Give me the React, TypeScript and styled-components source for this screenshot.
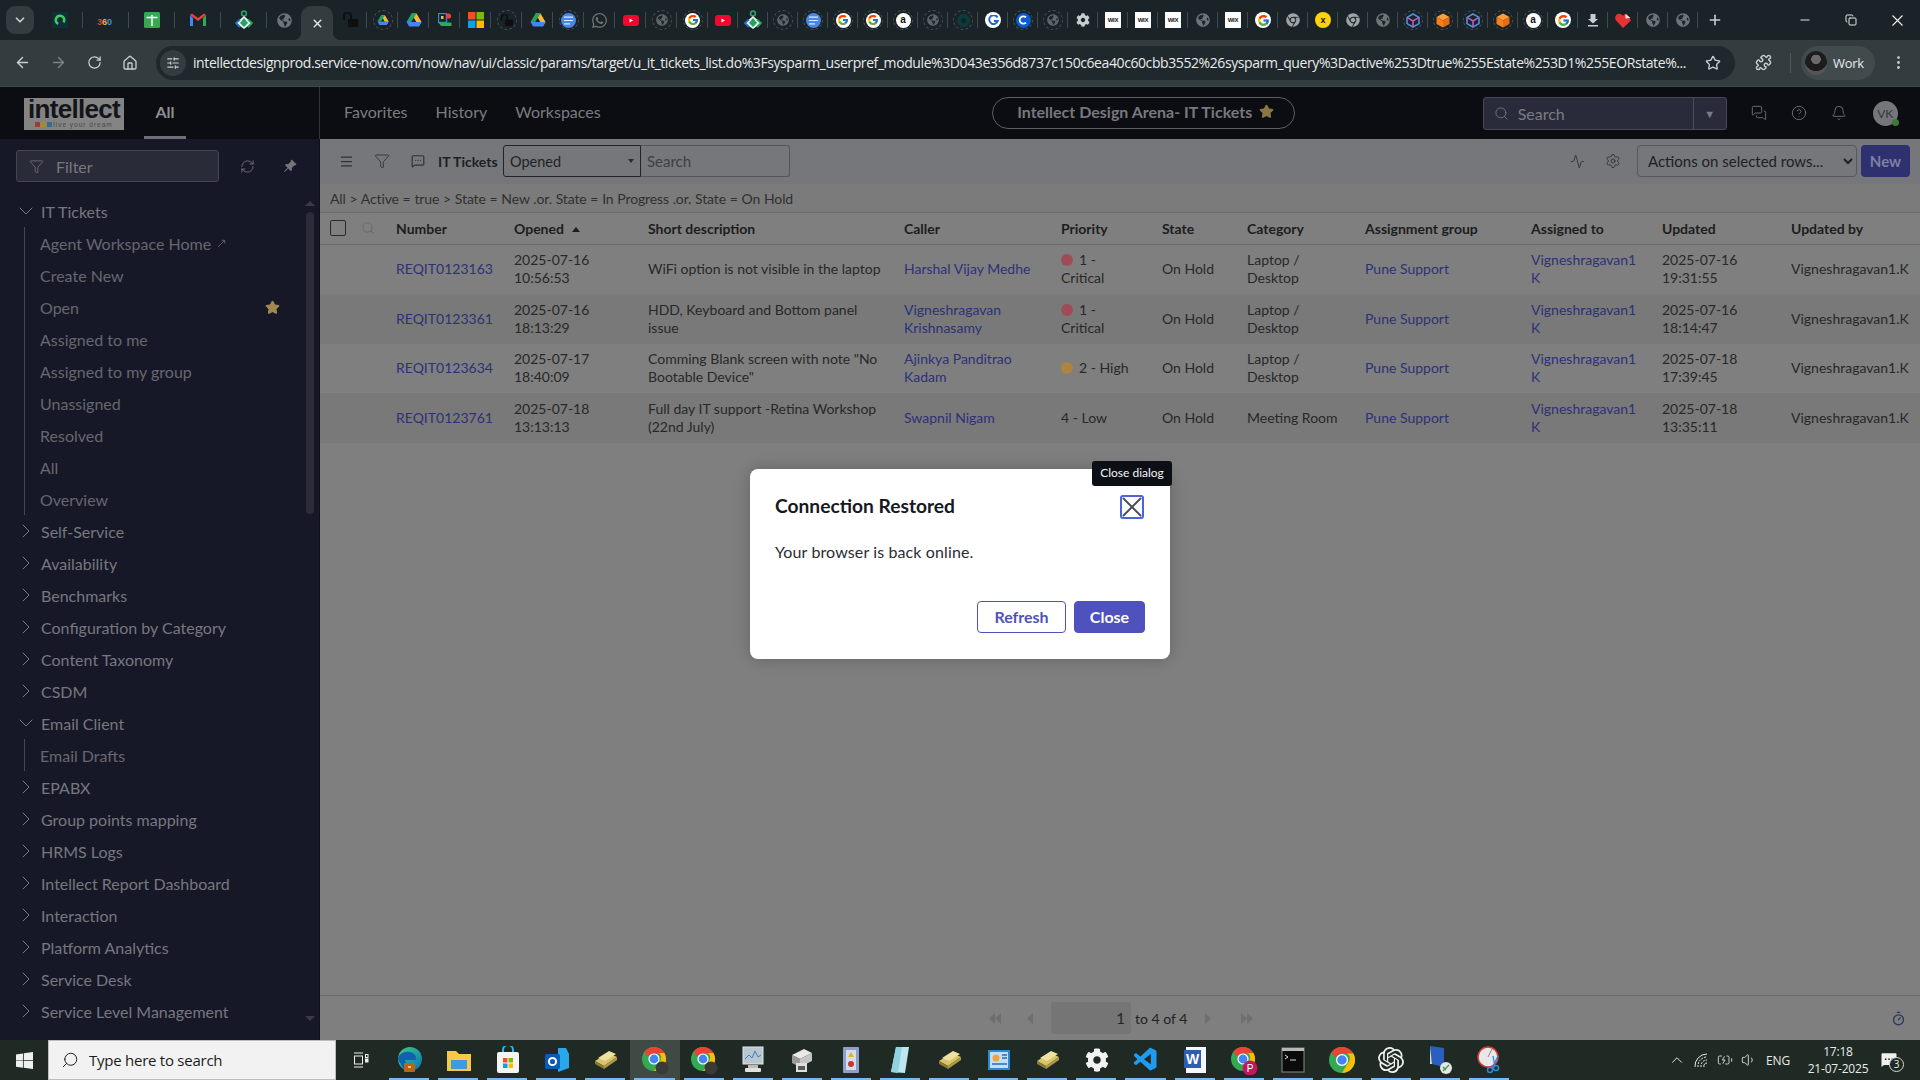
import React from 'react';
import styled, { createGlobalStyle } from 'styled-components';
import {
  ArrowLeft, ArrowRight, RotateCw, House, Star, Puzzle, EllipsisVertical, Search, Funnel, RefreshCw,
  ChevronRight, ChevronDown, X, Menu, MessageSquareMore, Activity, Settings, CircleHelp, Bell, MessagesSquare,
  Timer, SlidersHorizontal, Plus, Minus, Copy, Volume1, BatteryCharging, ChevronUp, MoveUpRight,
} from 'lucide-react';
import { BsPinAngleFill, BsWindows } from 'react-icons/bs';
import { FaChrome, FaGlobeAmericas, FaWhatsapp, FaCog } from 'react-icons/fa';
import { FcGoogle } from 'react-icons/fc';
import { VscVscode } from 'react-icons/vsc';
import { SiOpenai } from 'react-icons/si';

const GlobalStyle = createGlobalStyle`
  html, body { margin: 0; padding: 0; background: #1a2327; }
  * { box-sizing: border-box; }
  body { font-family: Lato, "Liberation Sans", sans-serif; }
`;

const Screen = styled.div`
  width: 1920px;
  height: 1080px;
  display: flex;
  flex-direction: column;
  overflow: hidden;
`;

/* ---- chrome tab strip ---- */
const TabStrip = styled.div`
  height: 40px;
  flex: none;
  display: flex;
  align-items: flex-end;
  background: #1a2327;
  color: #c9ced0;
`;

const TabSearchBtn = styled.div`
  width: 28px;
  height: 28px;
  margin: 0 3px 6px 6px;
  border-radius: 9px;
  background: #333c3f;
  display: flex;
  align-items: center;
  justify-content: center;
`;

const TabSlot = styled.div<{ $w: number; $noLine?: boolean }>`
  width: ${p => p.$w}px;
  height: 40px;
  flex: none;
  display: flex;
  align-items: center;
  justify-content: center;
  background-image: ${p => (p.$noLine ? 'none' : 'linear-gradient(#42494c, #42494c)')};
  background-size: 1px 16px;
  background-repeat: no-repeat;
  background-position: right center;
`;

const ActiveTab = styled.div`
  width: 32px;
  height: 34px;
  flex: none;
  position: relative;
  background: #333c3f;
  border-radius: 10px 10px 0 0;
  display: flex;
  align-items: center;
  justify-content: center;
  &::before, &::after {
    content: '';
    position: absolute;
    bottom: 0;
    width: 8px;
    height: 8px;
  }
  &::before { left: -8px; background: radial-gradient(circle at 0 0, transparent 8px, #333c3f 8.5px); }
  &::after { right: -8px; background: radial-gradient(circle at 100% 0, transparent 8px, #333c3f 8.5px); }
`;

const NewTab = styled.div`
  width: 34px;
  height: 40px;
  flex: none;
  display: flex;
  align-items: center;
  justify-content: center;
`;

const WindowControls = styled.div`
  margin-left: auto;
  display: flex;
  flex: none;
`;

const WindowBtn = styled.div`
  width: 46px;
  height: 40px;
  display: flex;
  align-items: center;
  justify-content: center;
  color: #e4e7e8;
`;

const Ring = styled.span`
  width: 20px;
  height: 20px;
  border: 1.5px dashed #4c5558;
  border-radius: 50%;
  display: flex;
  align-items: center;
  justify-content: center;
`;

const Round = styled.span<{ $bg: string; $size?: number }>`
  width: ${p => p.$size ?? 16}px;
  height: ${p => p.$size ?? 16}px;
  border-radius: 50%;
  background: ${p => p.$bg};
  display: flex;
  align-items: center;
  justify-content: center;
  flex: none;
`;

const WixBadge = styled.span`
  width: 16px;
  height: 16px;
  background: #fff;
  color: #111;
  font: 700 6px "Liberation Sans", sans-serif;
  letter-spacing: -0.2px;
  display: flex;
  align-items: center;
  justify-content: center;
`;

const AmazonA = styled.span`
  color: #111;
  font: 700 10px "Liberation Sans", sans-serif;
  line-height: 10px;
`;

const BlackX = styled.span`
  color: #111;
  font: 700 9px "Liberation Sans", sans-serif;
`;

const Drive = ({ s = 16 }: { s?: number }) => (
  <svg width={s} height={s} viewBox="0 0 16 16">
    <polygon points="5.5,1.5 10.5,1.5 15.5,10 12.8,14.5 " fill="#f9bb2d" />
    <polygon points="5.5,1.5 10.5,1.5 5.2,10 0.5,10" fill="#20a464" />
    <polygon points="0.5,10 5.2,10 15.5,10 12.8,14.5 3.2,14.5" fill="#4285f4" />
  </svg>
);

const Gmail = () => (
  <svg width="16" height="14" viewBox="0 0 16 14">
    <path d="M0 2v11h3V5z" fill="#4285f4" />
    <path d="M16 2v11h-3V5z" fill="#34a853" />
    <path d="M0 2l8 6 8-6-2-1.5L8 5 2 .5z" fill="#ea4335" />
  </svg>
);

const Kite = () => (
  <svg width="18" height="20" viewBox="0 0 18 20">
    <circle cx="9" cy="3.5" r="2.4" fill="none" stroke="#2f9c6a" strokeWidth="1.6" />
    <polygon points="9,6 17,13 9,19 1,13" fill="#e8f2ef" />
    <polygon points="9,8 13,13 9,17 5,13" fill="#2aa05f" />
    <polyline points="5,9.5 1,13 5,17" fill="none" stroke="#2a72c9" strokeWidth="1.8" />
    <polyline points="13,9.5 17,13 13,17" fill="none" stroke="#2aa05f" strokeWidth="1.8" />
  </svg>
);

const Microsoft = () => (
  <svg width="16" height="16" viewBox="0 0 16 16">
    <rect width="7.5" height="7.5" fill="#f25022" />
    <rect x="8.5" width="7.5" height="7.5" fill="#7fba00" />
    <rect y="8.5" width="7.5" height="7.5" fill="#00a4ef" />
    <rect x="8.5" y="8.5" width="7.5" height="7.5" fill="#ffb900" />
  </svg>
);

const Lock = ({ s = 16 }: { s?: number }) => (
  <svg width={s} height={s} viewBox="0 0 16 16">
    <rect x="6" y="7" width="10" height="8" fill="#0d0f10" />
    <path d="M2 8V4a3.5 3.5 0 0 1 7 0v3" fill="none" stroke="#0d0f10" strokeWidth="2" />
  </svg>
);

const DocsBlue = () => (
  <Round $bg="#4a86e8" $size={15}>
    <svg width="9" height="9" viewBox="0 0 9 9">
      <path d="M0 1.2h9M0 4.5h9M0 7.8h6" stroke="#dfe9fb" strokeWidth="1.2" />
    </svg>
  </Round>
);

const Youtube = () => (
  <svg width="16" height="11" viewBox="0 0 16 11">
    <rect width="16" height="11" rx="3" fill="#f4052e" />
    <polygon points="6.5,3.5 10,5.5 6.5,7.5" fill="#fff" />
  </svg>
);

const Cube = ({ mix }: { mix?: boolean }) => (
  <svg width="14" height="15" viewBox="0 0 14 15">
    {mix ? (
      <g fill="none" strokeWidth="1.6">
        <path d="M7 1l6 3.4v6.2L7 14 1 10.6V4.4z" stroke="#4f8fe0" />
        <path d="M1 4.4L7 8l6-3.6M7 8v6" stroke="#c15bb8" />
      </g>
    ) : (
      <g>
        <polygon points="7,0.5 13.5,4 7,7.5 0.5,4" fill="#ff9d3c" />
        <polygon points="0.5,4 7,7.5 7,14.5 0.5,11" fill="#f47f1f" />
        <polygon points="13.5,4 7,7.5 7,14.5 13.5,11" fill="#e66d12" />
      </g>
    )}
  </svg>
);

const Heart = () => (
  <svg width="16" height="15" viewBox="0 0 16 15">
    <path d="M8 15L1 7.5C-1 4.5 1 .8 4.2.8 6 .8 7.2 1.8 8 3c.8-1.2 2-2.2 3.8-2.2L16 7.5z" fill="#e73232" />
    <polygon points="10.5,1 15.5,5 10.5,5.5" fill="#f4e6e6" />
  </svg>
);

const TeamsRing = () => (
  <svg width="16" height="16" viewBox="0 0 16 16">
    <rect width="16" height="16" rx="1" fill="#0f2f3a" />
    <circle cx="8" cy="8" r="4.2" fill="none" stroke="#49c95b" strokeWidth="2.6" strokeDasharray="20 6" transform="rotate(115 8 8)" />
  </svg>
);

const tabIcons: Record<string, React.ReactNode> = {
  teal: <TeamsRing />,
  t360: <svg width="18" height="16" viewBox="0 0 18 16"><text x="0" y="13" fontSize="9" fontWeight="700" fontFamily="Liberation Sans"><tspan fill="#d94135">3</tspan><tspan fill="#e0b52c">6</tspan><tspan fill="#2d9bd6">0</tspan></text></svg>,
  sheet: <svg width="16" height="16" viewBox="0 0 16 16"><rect width="16" height="16" rx="1.5" fill="#34a853" /><path d="M2.5 5.5h11M8 3v11" stroke="#fff" strokeWidth="1.4" /></svg>,
  gmail: <Gmail />,
  kite: <Kite />,
  globeDot: <FaGlobeAmericas size={15} color="#6e7477" />,
  lock: <Lock />,
  driveRing: <Ring><Drive s={12} /></Ring>,
  drive: <Drive />,
  meet: <svg width="14" height="14" viewBox="0 0 14 14"><rect x="0.5" y="0.5" width="8" height="9" fill="none" stroke="#2b8cd6" strokeWidth="1.4" /><path d="M0.5 9.5h13V13H3z" fill="#34a853" /><circle cx="10.5" cy="3" r="2.6" fill="#ea4335" /><rect x="3" y="3" width="2.5" height="3" fill="#f9bb2d" /></svg>,
  ms: <Microsoft />,
  lockRing: <Ring><Lock s={13} /></Ring>,
  docsRing: <Ring><DocsBlue /></Ring>,
  wa: <FaWhatsapp size={17} color="#6f7577" />,
  yt: <Youtube />,
  globeRing: <Ring><FaGlobeAmericas size={12} color="#5f6568" /></Ring>,
  gRing: <Ring><Round $bg="#fff" $size={15}><FcGoogle size={12} /></Round></Ring>,
  g: <Round $bg="#fff"><FcGoogle size={13} /></Round>,
  amazonRing: <Ring><Round $bg="#fff" $size={15}><AmazonA>a</AmazonA></Round></Ring>,
  cursorRing: <Ring><Round $bg="#0e3b37" $size={13}><Round $bg="#123" $size={5} /></Round></Ring>,
  gBlue: <Round $bg="#fff"><svg width="11" height="11" viewBox="0 0 11 11"><path d="M9.5 2.5A4.4 4.4 0 1 0 9.8 6H6" fill="none" stroke="#2563d8" strokeWidth="2" /></svg></Round>,
  cRing: <Ring><Round $bg="#0b5bd3" $size={15}><svg width="10" height="10" viewBox="0 0 10 10"><path d="M8 2.4A3.7 3.7 0 1 0 8 7.6" fill="none" stroke="#fff" strokeWidth="1.8" /></svg></Round></Ring>,
  gear: <FaCog size={14} color="#c8cdcf" />,
  wix: <WixBadge>WIX</WixBadge>,
  globe: <FaGlobeAmericas size={14} color="#6e7477" />,
  chrome: <FaChrome size={14} color="#9ea3a5" />,
  xcoin: <Round $bg="#fdd20a"><BlackX>x</BlackX></Round>,
  cubeRing: <Ring><Cube mix /></Ring>,
  orangeRing: <Ring><Cube /></Ring>,
  download: <svg width="12" height="13" viewBox="0 0 12 13"><path d="M3.5 0h5v5H11L6 9.5 1 5h2.5zM1 11h10v1.6H1z" fill="#c8cdcf" /></svg>,
  heart: <Heart />,
};

const wideTabs = ['teal', 't360', 'sheet', 'gmail', 'kite'];
const midTabs = ['driveRing', 'drive', 'meet', 'ms', 'lockRing', 'drive', 'docsRing', 'wa', 'yt', 'globeRing', 'gRing'];
const narrowTabs = [
  'yt', 'kite', 'globeRing', 'docsRing', 'gRing', 'gRing', 'amazonRing', 'globeRing', 'cursorRing', 'gBlue', 'cRing',
  'globeRing', 'gear', 'wix', 'wix', 'wix', 'globe', 'wix', 'g', 'chrome', 'xcoin', 'chrome', 'globe', 'cubeRing',
  'orangeRing', 'cubeRing', 'orangeRing', 'amazonRing', 'g', 'download', 'heart', 'globe', 'globe',
];

const BrowserTabs = () => (
  <TabStrip>
    <TabSearchBtn><ChevronDown size={14} strokeWidth={3} /></TabSearchBtn>
    {wideTabs.map((k, i) => <TabSlot key={i} $w={46}>{tabIcons[k]}</TabSlot>)}
    <TabSlot $w={34} $noLine>{tabIcons.globeDot}</TabSlot>
    <ActiveTab><X size={13} strokeWidth={2.6} color="#e8eaeb" /></ActiveTab>
    <TabSlot $w={34}>{tabIcons.lock}</TabSlot>
    {midTabs.map((k, i) => <TabSlot key={i} $w={31}>{tabIcons[k]}</TabSlot>)}
    {narrowTabs.map((k, i) => <TabSlot key={i} $w={30}>{tabIcons[k]}</TabSlot>)}
    <NewTab><Plus size={16} strokeWidth={2.4} /></NewTab>
    <WindowControls>
      <WindowBtn><Minus size={14} /></WindowBtn>
      <WindowBtn><Copy size={12} /></WindowBtn>
      <WindowBtn>
        <svg width="11" height="11" viewBox="0 0 11 11">
          <path d="M0.5 0.5l10 10M10.5 0.5l-10 10" stroke="#f0f2f3" strokeWidth="1.1" fill="none" />
        </svg>
      </WindowBtn>
    </WindowControls>
  </TabStrip>
);

/* ---- chrome address bar ---- */
const AddressRow = styled.div`
  height: 47px;
  flex: none;
  display: flex;
  align-items: center;
  background: #333c3f;
  border-bottom: 1px solid #3f484b;
  color: #c9ced0;
  padding: 0 0 1px 4px;
`;

const NavBtn = styled.div<{ $dim?: boolean }>`
  width: 36px;
  height: 34px;
  flex: none;
  display: flex;
  align-items: center;
  justify-content: center;
  color: ${p => (p.$dim ? '#7c8385' : '#c9ced0')};
`;

const Omnibox = styled.div`
  width: 1579px;
  height: 34px;
  margin-left: 8px;
  flex: none;
  border-radius: 17px;
  background: #1f282c;
  display: flex;
  align-items: center;
  padding-left: 4px;
`;

const SiteBadge = styled.div`
  width: 26px;
  height: 26px;
  border-radius: 50%;
  background: #333c3f;
  display: flex;
  align-items: center;
  justify-content: center;
  flex: none;
`;

const UrlText = styled.div`
  font: 400 14px "Open Sans", sans-serif;
  color: #e8eaeb;
  margin-left: 7px;
  width: 1500px;
  flex: none;
  white-space: nowrap;
  letter-spacing: -0.41px;
`;

const OmniStar = styled.div`
  margin-left: 12px;
  display: flex;
`;

const ExtBtn = styled.div`
  width: 36px;
  margin-left: 10px;
  display: flex;
  justify-content: center;
`;

const BarDivider = styled.div`
  width: 1px;
  height: 20px;
  background: #50595c;
  margin: 0 10px 0 9px;
`;

const ProfilePill = styled.div`
  width: 74px;
  height: 34px;
  border-radius: 17px;
  background: #414b4e;
  display: flex;
  align-items: center;
  gap: 6px;
  padding-left: 4px;
  font: 400 13px "Open Sans", sans-serif;
  color: #e8eaeb;
  letter-spacing: -0.3px;
`;

const ProfilePic = styled.div`
  width: 22px;
  height: 24px;
  border-radius: 50%;
  background: radial-gradient(circle at 50% 35%, #6a6a6a 0 24%, #1d1d1d 26% 60%, #555 62%);
`;

const MenuBtn = styled.div`
  margin-left: 3px;
  width: 40px;
  display: flex;
  justify-content: center;
`;

const AddressBar = () => (
  <AddressRow>
    <NavBtn><ArrowLeft size={17} /></NavBtn>
    <NavBtn $dim><ArrowRight size={17} /></NavBtn>
    <NavBtn><RotateCw size={15} /></NavBtn>
    <NavBtn><House size={16} /></NavBtn>
    <Omnibox>
      <SiteBadge><SlidersHorizontal size={14} /></SiteBadge>
      <UrlText>intellectdesignprod.service-now.com/now/nav/ui/classic/params/target/u_it_tickets_list.do%3Fsysparm_userpref_module%3D043e356d8737c150c6ea40c60cbb3552%26sysparm_query%3Dactive%253Dtrue%255Estate%253D1%255EORstate%...</UrlText>
      <OmniStar><Star size={16} /></OmniStar>
    </Omnibox>
    <ExtBtn><Puzzle size={17} /></ExtBtn>
    <BarDivider />
    <ProfilePill><ProfilePic />Work</ProfilePill>
    <MenuBtn><EllipsisVertical size={17} /></MenuBtn>
  </AddressRow>
);

/* ---- servicenow frame ---- */
const AppFrame = styled.div`
  flex: 1;
  position: relative;
  display: flex;
  flex-direction: column;
  min-height: 0;
`;

const AppHeader = styled.header`
  height: 52px;
  flex: none;
  display: flex;
  background: #0c0d12;
  color: #7b7c80;
  font-size: 16px;
`;

const HeaderLeft = styled.div`
  width: 320px;
  flex: none;
  display: flex;
  align-items: center;
  padding-left: 24px;
  border-right: 1px solid #34353b;
  height: 100%;
`;

const LogoBox = styled.div`
  width: 100px;
  height: 32px;
  margin-top: 1px;
  background: #848484;
  color: #14151a;
  display: flex;
  flex-direction: column;
  align-items: center;
`;

const LogoWord = styled.div`
  font: 700 26px/23px "Liberation Sans", sans-serif;
  letter-spacing: -0.7px;
`;

const LogoTag = styled.div`
  display: flex;
  align-items: center;
  gap: 1px;
  font: 400 6.5px/8px "Liberation Sans", sans-serif;
  letter-spacing: 1px;
  color: #4a4a4a;
`;

const LogoDot = styled.i<{ $c: string }>`
  width: 5px;
  height: 5px;
  background: ${p => p.$c};
`;

const AllTab = styled.div`
  margin-left: 20px;
  width: 42px;
  height: 100%;
  display: flex;
  align-items: center;
  justify-content: center;
  color: #8f9094;
  font-weight: 700;
  border-bottom: 3px solid #6d6e78;
`;

const HeaderNav = styled.nav`
  display: flex;
  align-items: center;
  gap: 28px;
  padding: 0 0 3px 24px;
`;

const HeaderCenter = styled.div`
  width: 303px;
  height: 32px;
  margin: 10px 0 0 391px;
  padding: 0 0 3px 5px;
  border: 1px solid #5c5d63;
  border-radius: 16px;
  display: flex;
  align-items: center;
  justify-content: center;
  gap: 7px;
  font-weight: 700;
  color: #77787e;
  flex: none;
`;

const HeaderSearch = styled.div`
  width: 244px;
  height: 33px;
  margin: 10px 0 0 188px;
  background: #2a2b3a;
  border: 1px solid #47485a;
  border-radius: 3px;
  display: flex;
  align-items: center;
  color: #7b7c84;
  flex: none;
`;

const HeaderSearchInput = styled.div`
  width: 210px;
  display: flex;
  align-items: center;
  gap: 9px;
  padding: 0 0 1px 10px;
  height: 100%;
  border-right: 1px solid #4c4d5e;
`;

const HeaderSearchCaret = styled.div`
  flex: 1;
  text-align: center;
  font-size: 11px;
`;

const HeaderIcons = styled.div`
  display: flex;
  align-items: center;
  gap: 24px;
  margin-left: 24px;
  color: #77787f;
  flex: none;
`;

const Avatar = styled.div`
  width: 25px;
  height: 25px;
  border-radius: 50%;
  background: #75767a;
  color: #36373c;
  font-size: 12px;
  position: relative;
  display: flex;
  align-items: center;
  justify-content: center;
  margin-left: 2px;
  &::after {
    content: '';
    position: absolute;
    right: -1px;
    bottom: 0;
    width: 7px;
    height: 7px;
    border-radius: 50%;
    background: #3d7a3a;
  }
`;

const AppBody = styled.div`
  flex: 1;
  display: flex;
  min-height: 0;
`;

/* ---- sidebar ---- */
const Sidebar = styled.aside`
  width: 320px;
  flex: none;
  background: #171827;
  color: #74757c;
  display: flex;
  flex-direction: column;
  border-right: 1px solid #0f1019;
`;

const FilterRow = styled.div`
  display: flex;
  align-items: center;
  padding: 11px 0 13px 16px;
`;

const FilterBox = styled.div`
  width: 203px;
  height: 32px;
  background: #2a2b38;
  border: 1px solid #45464f;
  border-radius: 3px;
  display: flex;
  align-items: center;
  gap: 12px;
  padding-left: 12px;
  font-size: 16px;
  color: #77787f;
`;

const FilterAction = styled.div`
  margin-left: 20px;
  width: 16px;
  display: flex;
  justify-content: center;
  & + & { margin-left: 27px; }
`;

const TreeWrap = styled.div`
  flex: 1;
  display: flex;
  min-height: 0;
`;

const Tree = styled.div`
  flex: 1;
  overflow: hidden;
  font-size: 16px;
`;

const GroupRow = styled.div`
  height: 32px;
  display: flex;
  align-items: center;
  gap: 3px;
  padding-left: 14px;
  color: #76777f;
`;

const ChildList = styled.div`
  margin-left: 24px;
  padding-left: 15px;
  border-left: 1px solid #46474f;
`;

const ChildRow = styled.div`
  height: 32px;
  display: flex;
  align-items: center;
  gap: 5px;
  padding-right: 26px;
  color: #66676f;
`;

const FavStar = styled.div`
  margin-left: auto;
  display: flex;
`;

const ScrollTrack = styled.div`
  width: 8px;
  margin-right: 5px;
  padding: 6px 0 19px;
  display: flex;
  flex-direction: column;
  align-items: center;
`;

const ScrollArrow = styled.div<{ $down?: boolean }>`
  width: 0;
  height: 0;
  border-left: 5px solid transparent;
  border-right: 5px solid transparent;
  ${p => (p.$down ? 'border-top: 5px solid #3a3b47;' : 'border-bottom: 5px solid #3a3b47;')}
`;

const ScrollThumb = styled.div`
  width: 8px;
  height: 302px;
  margin-top: 6px;
  border-radius: 4px;
  background: #2b2c38;
`;

const ScrollFill = styled.div`
  flex: 1;
`;

interface NavGroup { name: string; open?: boolean; children?: string[] }

const navGroups: NavGroup[] = [
  { name: 'IT Tickets', open: true, children: ['Agent Workspace Home', 'Create New', 'Open', 'Assigned to me', 'Assigned to my group', 'Unassigned', 'Resolved', 'All', 'Overview'] },
  { name: 'Self-Service' },
  { name: 'Availability' },
  { name: 'Benchmarks' },
  { name: 'Configuration by Category' },
  { name: 'Content Taxonomy' },
  { name: 'CSDM' },
  { name: 'Email Client', open: true, children: ['Email Drafts'] },
  { name: 'EPABX' },
  { name: 'Group points mapping' },
  { name: 'HRMS Logs' },
  { name: 'Intellect Report Dashboard' },
  { name: 'Interaction' },
  { name: 'Platform Analytics' },
  { name: 'Service Desk' },
  { name: 'Service Level Management' },
];

const SideNav = () => (
  <Sidebar>
    <FilterRow>
      <FilterBox><Funnel size={15} strokeWidth={1.2} />Filter</FilterBox>
      <FilterAction><RefreshCw size={15} strokeWidth={1.4} /></FilterAction>
      <FilterAction><BsPinAngleFill size={14} /></FilterAction>
    </FilterRow>
    <TreeWrap>
      <Tree>
        {navGroups.map(g => (
          <React.Fragment key={g.name}>
            <GroupRow>
              {g.open ? <ChevronDown size={24} strokeWidth={1} /> : <ChevronRight size={24} strokeWidth={1} />}
              {g.name}
            </GroupRow>
            {g.children && (
              <ChildList>
                {g.children.map(c => (
                  <ChildRow key={c}>
                    {c}
                    {c === 'Agent Workspace Home' && <MoveUpRight size={11} />}
                    {c === 'Open' && <FavStar><Star size={15} fill="#a08850" color="#a08850" /></FavStar>}
                  </ChildRow>
                ))}
              </ChildList>
            )}
          </React.Fragment>
        ))}
      </Tree>
      <ScrollTrack>
        <ScrollArrow />
        <ScrollThumb />
        <ScrollFill />
        <ScrollArrow $down />
      </ScrollTrack>
    </TreeWrap>
  </Sidebar>
);

/* ---- list ---- */
const Main = styled.main`
  flex: 1;
  min-width: 0;
  display: flex;
  flex-direction: column;
  background: #7f7f7f;
  color: #232323;
  font-size: 14px;
`;

const ListBar = styled.div`
  height: 45px;
  flex: none;
  background: #75777a;
  display: flex;
  align-items: center;
  padding: 0 10px 1px 18px;
  color: #2d3138;
`;

const BarIcon = styled.div`
  width: 16px;
  margin-right: 20px;
  display: flex;
  justify-content: center;
  &:nth-of-type(3) { margin-right: 12px; }
`;

const ListTitle = styled.div`
  font-weight: 700;
  font-size: 14px;
  color: #1d1f22;
  white-space: nowrap;
  width: 65px;
`;

const ListSelect = styled.div`
  width: 138px;
  height: 32px;
  border: 1px solid #22242a;
  border-radius: 3px 0 0 3px;
  display: flex;
  align-items: center;
  padding: 0 6px;
  font-size: 14.5px;
  color: #222;
  justify-content: space-between;
  &::after {
    content: '';
    border-left: 3px solid transparent;
    border-right: 3px solid transparent;
    border-top: 4px solid #2b2b2b;
  }
`;

const ListSearch = styled.div`
  width: 149px;
  height: 32px;
  border: 1px solid #53565c;
  border-left: none;
  border-radius: 0 3px 3px 0;
  display: flex;
  align-items: center;
  padding-left: 6px;
  font-size: 15px;
  color: #3e4045;
`;

const BarRight = styled.div`
  margin-left: auto;
  display: flex;
  align-items: center;
`;

const BarRightIcon = styled.div`
  width: 16px;
  margin-right: 20px;
  display: flex;
  justify-content: center;
  & + & { margin-right: 16px; }
`;

const ActionSelect = styled.select`
  width: 220px;
  height: 32px;
  background: transparent;
  border: 1px solid #55585e;
  border-radius: 4px;
  padding: 0 6px;
  font: 400 15px Lato, sans-serif;
  color: #1e2024;
  margin-right: 4px;
`;

const NewBtn = styled.div`
  width: 49px;
  height: 32px;
  background: #2e3070;
  color: #7e80a4;
  border-radius: 4px;
  font-weight: 700;
  font-size: 15px;
  display: flex;
  align-items: center;
  justify-content: center;
`;

const Breadcrumb = styled.div`
  height: 29px;
  flex: none;
  background: #7b7b7b;
  border-bottom: 1px solid #6a6a6a;
  display: flex;
  align-items: center;
  padding-left: 10px;
  font-size: 14px;
  letter-spacing: -0.14px;
  word-spacing: 0.4px;
  color: #303030;
  white-space: pre;
`;

const Table = styled.table`
  width: 1600px;
  table-layout: fixed;
  border-collapse: collapse;
`;

const Th = styled.th`
  height: 31px;
  padding: 0;
  text-align: left;
  font-weight: 700;
  color: #1d1d1d;
  border-bottom: 1px solid #6a6a6a;
`;

const Tr = styled.tr`
  &:nth-child(odd) td { background: #7f7f7f; }
  &:nth-child(even) td { background: #797979; }
`;

const Td = styled.td`
  padding: 6.75px 16px 6.75px 0;
  line-height: 18px;
  vertical-align: middle;
  color: #282828;
`;

const CellLink = styled.span`
  color: #2d3178;
`;

const HeadTools = styled.div`
  display: flex;
  align-items: center;
  padding-left: 10px;
  gap: 15px;
`;

const CheckBox = styled.div`
  width: 16px;
  height: 16px;
  border: 1px solid #2a2a2a;
  border-radius: 2px;
`;

const SortCaret = styled.span`
  display: inline-block;
  margin-left: 8px;
  vertical-align: 2px;
  border-left: 4px solid transparent;
  border-right: 4px solid transparent;
  border-bottom: 5px solid #1d1d1d;
`;

const PriorityCell = styled.div`
  max-width: 72px;
`;

const PriorityDot = styled.span<{ $c: string }>`
  display: inline-block;
  width: 12px;
  height: 12px;
  border-radius: 50%;
  background: ${p => p.$c};
  margin-right: 6px;
  vertical-align: -1px;
`;

const ListSpacer = styled.div`
  flex: 1;
`;

const Pager = styled.footer`
  height: 45px;
  flex: none;
  border-top: 1px solid #6a6a6a;
  display: flex;
  align-items: center;
  color: #6c6e72;
  padding-left: 669px;
`;

const PagerBtn = styled.div<{ $gap: number }>`
  margin-right: ${p => p.$gap}px;
  display: flex;
`;

const PagerInput = styled.div`
  width: 80px;
  height: 32px;
  background: #757575;
  border-radius: 3px;
  display: flex;
  align-items: center;
  justify-content: flex-end;
  padding-right: 6px;
  font-size: 15px;
  color: #222;
`;

const PagerText = styled.div`
  margin: 0 18px 0 4px;
  font-size: 14px;
  color: #222;
`;

const PagerTimer = styled.div`
  margin-left: auto;
  margin-right: 14px;
  color: #2d3560;
  display: flex;
`;

const PageArrow = ({ dir, double }: { dir: 'l' | 'r'; double?: boolean }) => (
  <svg width={double ? 12 : 6} height="11" viewBox={double ? '0 0 12 11' : '0 0 6 11'} fill="#6c6e72">
    {dir === 'l' ? <polygon points="6,0 0,5.5 6,11" /> : <polygon points="0,0 6,5.5 0,11" />}
    {double && (dir === 'l' ? <polygon points="12,0 6,5.5 12,11" /> : <polygon points="6,0 12,5.5 6,11" />)}
  </svg>
);

const colWidths = [76, 118, 134, 256, 157, 101, 85, 118, 166, 131, 129, 129];
const headers = ['Number', 'Opened', 'Short description', 'Caller', 'Priority', 'State', 'Category', 'Assignment group', 'Assigned to', 'Updated', 'Updated by'];

interface Ticket {
  number: string; opened: string; desc: string; caller: string; priority: string;
  dot?: string; category: string; updated: string;
}

const tickets: Ticket[] = [
  { number: 'REQIT0123163', opened: '2025-07-16 10:56:53', desc: 'WiFi option is not visible in the laptop', caller: 'Harshal Vijay Medhe', priority: '1 - Critical', dot: '#a04c58', category: 'Laptop / Desktop', updated: '2025-07-16 19:31:55' },
  { number: 'REQIT0123361', opened: '2025-07-16 18:13:29', desc: 'HDD, Keyboard and Bottom panel issue', caller: 'Vigneshragavan Krishnasamy', priority: '1 - Critical', dot: '#a04c58', category: 'Laptop / Desktop', updated: '2025-07-16 18:14:47' },
  { number: 'REQIT0123634', opened: '2025-07-17 18:40:09', desc: 'Comming Blank screen with note "No Bootable Device"', caller: 'Ajinkya Panditrao Kadam', priority: '2 - High', dot: '#ad8440', category: 'Laptop / Desktop', updated: '2025-07-18 17:39:45' },
  { number: 'REQIT0123761', opened: '2025-07-18 13:13:13', desc: 'Full day IT support -Retina Workshop (22nd July)', caller: 'Swapnil Nigam', priority: '4 - Low', category: 'Meeting Room', updated: '2025-07-18 13:35:11' },
];

const TicketList = () => (
  <Main>
    <ListBar>
      <BarIcon><Menu size={15} /></BarIcon>
      <BarIcon><Funnel size={16} strokeWidth={1.3} /></BarIcon>
      <BarIcon><MessageSquareMore size={14} /></BarIcon>
      <ListTitle>IT Tickets</ListTitle>
      <ListSelect>Opened</ListSelect>
      <ListSearch>Search</ListSearch>
      <BarRight>
        <BarRightIcon><Activity size={15} strokeWidth={1.4} /></BarRightIcon>
        <BarRightIcon><Settings size={16} strokeWidth={1.3} /></BarRightIcon>
        <ActionSelect defaultValue="a"><option value="a">Actions on selected rows...</option></ActionSelect>
        <NewBtn>New</NewBtn>
      </BarRight>
    </ListBar>
    <Breadcrumb>{'All > Active = true > State = New .or. State = In Progress .or. State = On Hold'}</Breadcrumb>
    <Table>
      <colgroup>
        {colWidths.map((w, i) => <col key={i} width={w} />)}
      </colgroup>
      <thead>
        <tr>
          <Th><HeadTools><CheckBox /><Search size={14} color="#6e6e6e" /></HeadTools></Th>
          {headers.map(h => <Th key={h}>{h}{h === 'Opened' && <SortCaret />}</Th>)}
        </tr>
      </thead>
      <tbody>
        {tickets.map(t => (
          <Tr key={t.number}>
            <Td />
            <Td><CellLink>{t.number}</CellLink></Td>
            <Td>{t.opened}</Td>
            <Td>{t.desc}</Td>
            <Td><CellLink>{t.caller}</CellLink></Td>
            <Td><PriorityCell>{t.dot && <PriorityDot $c={t.dot} />}{t.priority}</PriorityCell></Td>
            <Td>On Hold</Td>
            <Td>{t.category}</Td>
            <Td><CellLink>Pune Support</CellLink></Td>
            <Td><CellLink>Vigneshragavan1 K</CellLink></Td>
            <Td>{t.updated}</Td>
            <Td>Vigneshragavan1.K</Td>
          </Tr>
        ))}
      </tbody>
    </Table>
    <ListSpacer />
    <Pager>
      <PagerBtn $gap={26}><PageArrow dir="l" double /></PagerBtn>
      <PagerBtn $gap={18}><PageArrow dir="l" /></PagerBtn>
      <PagerInput>1</PagerInput>
      <PagerText>to 4 of 4</PagerText>
      <PagerBtn $gap={30}><PageArrow dir="r" /></PagerBtn>
      <PagerBtn $gap={0}><PageArrow dir="r" double /></PagerBtn>
      <PagerTimer><Timer size={15} /></PagerTimer>
    </Pager>
  </Main>
);

/* ---- modal ---- */
const ModalLayer = styled.div`
  position: absolute;
  inset: 0;
  display: flex;
  align-items: center;
  justify-content: center;
`;

const Modal = styled.div`
  width: 420px;
  height: 190px;
  background: #fff;
  border-radius: 8px;
  position: relative;
  padding: 23px 25px 26px;
  display: flex;
  flex-direction: column;
  box-shadow: 0 0 16px rgba(0, 0, 0, 0.22);
  color: #2a2b33;
`;

const ModalHead = styled.div`
  display: flex;
  align-items: center;
  justify-content: space-between;
  height: 26px;
`;

const ModalTitle = styled.h2`
  margin: 1px 0 0;
  font-size: 19.2px;
  font-weight: 700;
  color: #171821;
`;

const CloseIcon = styled.button`
  width: 24px;
  height: 24px;
  padding: 0;
  margin: 4px 1px 0 0;
  background: #fff;
  color: #4c4e5c;
  border: 2px solid #4d62dd;
  border-radius: 3px;
  display: flex;
  align-items: center;
  justify-content: center;
  overflow: hidden;
  svg { flex: none; }
`;

const ModalBody = styled.p`
  margin: 24px 0 0;
  font-size: 16px;
  line-height: 20px;
  letter-spacing: 0.12px;
`;

const ModalActions = styled.div`
  margin-top: auto;
  display: flex;
  justify-content: flex-end;
  gap: 8px;
`;

const ModalBtn = styled.button<{ $primary?: boolean }>`
  height: 32px;
  width: ${p => (p.$primary ? 71 : 89)}px;
  border: 1px solid #4f52bd;
  border-radius: 4px;
  background: ${p => (p.$primary ? '#4f52bd' : '#fff')};
  color: ${p => (p.$primary ? '#fff' : '#4f52bd')};
  font: 700 16px Lato, sans-serif;
`;

const Tooltip = styled.div`
  position: absolute;
  top: -8px;
  left: 342px;
  width: 80px;
  height: 25px;
  background: #0c0f16;
  color: #f4f4f4;
  border-radius: 3px;
  font-size: 12px;
  padding-bottom: 1px;
  display: flex;
  align-items: center;
  justify-content: center;
`;

const RestoredDialog = () => (
  <ModalLayer>
    <Modal>
      <Tooltip>Close dialog</Tooltip>
      <ModalHead>
        <ModalTitle>Connection Restored</ModalTitle>
        <CloseIcon><X size={34} strokeWidth={1.4} /></CloseIcon>
      </ModalHead>
      <ModalBody>Your browser is back online.</ModalBody>
      <ModalActions>
        <ModalBtn>Refresh</ModalBtn>
        <ModalBtn $primary>Close</ModalBtn>
      </ModalActions>
    </Modal>
  </ModalLayer>
);

/* ---- windows taskbar ---- */
const Taskbar = styled.div`
  height: 40px;
  flex: none;
  background: #1f2a24;
  display: flex;
  align-items: center;
  color: #f0f0f0;
`;

const StartBtn = styled.div`
  width: 48px;
  height: 40px;
  display: flex;
  align-items: center;
  justify-content: center;
`;

const SearchBox = styled.div`
  width: 288px;
  height: 40px;
  background: #f2f2f2;
  border: 1px solid #bdbdbd;
  display: flex;
  align-items: center;
  gap: 10px;
  padding-left: 12px;
  font: 400 15px "Open Sans", sans-serif;
  letter-spacing: -0.25px;
  color: #1c1c1c;
  svg { transform: scaleX(-1); }
`;

const TaskView = styled.div`
  width: 49px;
  display: flex;
  justify-content: center;
`;

const TaskItem = styled.div<{ $active?: boolean }>`
  width: 49.1px;
  height: 40px;
  flex: none;
  display: flex;
  align-items: center;
  justify-content: center;
  position: relative;
  background: ${p => (p.$active ? '#3f4a44' : 'transparent')};
  &::after {
    content: '';
    position: absolute;
    left: 4px;
    right: 5px;
    bottom: 0;
    height: 2px;
    background: #76b9ed;
  }
`;

const Tray = styled.div`
  margin-left: auto;
  display: flex;
  align-items: center;
  font: 400 12px "Open Sans", sans-serif;
  color: #e9ebe9;
  padding-right: 15px;
`;

const TrayIcon = styled.div`
  width: 24px;
  display: flex;
  justify-content: center;
`;

const TrayLang = styled.div`
  width: 34px;
  margin-right: 8px;
  text-align: center;
  letter-spacing: -0.2px;
`;

const Clock = styled.div`
  width: 70px;
  text-align: center;
  line-height: 17px;
  letter-spacing: -0.2px;
`;

const Notify = styled.div`
  width: 32px;
  display: flex;
  justify-content: center;
  position: relative;
`;

const NotifyCount = styled.span`
  position: absolute;
  left: 16px;
  top: 7px;
  width: 15px;
  height: 15px;
  border-radius: 50%;
  background: #1f2a24;
  border: 1px solid #d8d8d8;
  font-size: 10px;
  line-height: 13px;
  text-align: center;
`;

const WifiFan = () => (
  <svg width="16" height="16" viewBox="0 0 16 16" fill="none" stroke="#e9ebe9" strokeWidth="1">
    <path d="M2 15a12 12 0 0 1 12-13" />
    <path d="M5 15a9 9 0 0 1 9-10" strokeDasharray="2 1" />
    <path d="M8 15a6 6 0 0 1 6-7" strokeDasharray="2 1" />
    <path d="M11 15a3 3 0 0 1 3-4" />
  </svg>
);

const ChromeGroup = () => (
  <g>
    <circle cx="12" cy="12" r="12" fill="#34a853" />
    <path d="M12 0a12 12 0 0 1 10.4 6H12a6 6 0 0 0-5.6 3.8L2.2 5A12 12 0 0 1 12 0z" fill="#ea4335" />
    <path d="M22.4 6A12 12 0 0 1 12 24l5-8.6A6 6 0 0 0 17 6z" fill="#fbbc05" />
    <circle cx="12" cy="12" r="5" fill="#4285f4" stroke="#fff" strokeWidth="1.2" />
  </g>
);

const ChromeLogo = ({ s = 26 }: { s?: number }) => (
  <svg width={s} height={s} viewBox="0 0 24 24"><ChromeGroup /></svg>
);

const Edge = () => (
  <svg width="26" height="28" viewBox="0 0 26 28">
    <defs>
      <linearGradient id="edgeG" x1="0" y1="0" x2="1" y2="1">
        <stop offset="0" stopColor="#3bd17a" />
        <stop offset="1" stopColor="#0a6fc2" />
      </linearGradient>
    </defs>
    <circle cx="13" cy="13" r="12" fill="url(#edgeG)" />
    <path d="M1 13C2 7 8 5 13 6c5 1 7 5 6 8H8c0 3 3 5 8 4-3 4-7 5-10 4" fill="#1360b0" />
    <rect x="7" y="17" width="11" height="9" rx="1" fill="#b5651d" />
    <rect x="11" y="20" width="3" height="2" fill="#f4c542" />
  </svg>
);

const Folder = () => (
  <svg width="26" height="24" viewBox="0 0 26 24">
    <path d="M1 3h9l3 3h12v17H1z" fill="#f7c948" />
    <rect x="5" y="12" width="16" height="9" fill="#3d9be0" />
  </svg>
);

const StoreBag = () => (
  <svg width="24" height="28" viewBox="0 0 24 28">
    <path d="M7 6V4a5 5 0 0 1 10 0v2" fill="none" stroke="#2bb6f0" strokeWidth="2" />
    <rect x="1" y="6" width="22" height="21" rx="2" fill="#f4f4f4" />
    <rect x="7" y="12" width="4.5" height="4.5" fill="#f25022" />
    <rect x="12.5" y="12" width="4.5" height="4.5" fill="#7fba00" />
    <rect x="7" y="17.5" width="4.5" height="4.5" fill="#00a4ef" />
    <rect x="12.5" y="17.5" width="4.5" height="4.5" fill="#ffb900" />
  </svg>
);

const Outlook = () => (
  <svg width="26" height="26" viewBox="0 0 26 26">
    <path d="M14 1h8l3 6v14l-11 4z" fill="#28a8ea" />
    <rect x="1" y="7" width="15" height="15" rx="1.5" fill="#0a5bb5" />
    <circle cx="8.5" cy="14.5" r="3.6" fill="none" stroke="#fff" strokeWidth="2" />
  </svg>
);

const MoneyStack = () => (
  <svg width="24" height="22" viewBox="0 0 24 22">
    <polygon points="1,12 14,4 23,8 10,17" fill="#d9c46a" />
    <polygon points="1,12 10,17 10,20 1,15" fill="#8b7a35" />
    <polygon points="10,17 23,8 23,11 10,20" fill="#b09a45" />
    <polygon points="4,9 15,2 22,5 11,12" fill="#efe2a0" />
  </svg>
);

const Profiled = ({ badge }: { badge: 'pic' | 'P' }) => (
  <svg width="28" height="30" viewBox="0 0 28 30">
    <g transform="translate(1 2)"><ChromeGroup /></g>
    {badge === 'pic' && <circle cx="21" cy="23" r="6.5" fill="#3a3a3a" />}
    {badge === 'P' && <circle cx="20" cy="23" r="7.5" fill="#c2185b" />}
    {badge === 'P' && <text x="20" y="26.5" fontSize="10" textAnchor="middle" fill="#fff" fontFamily="Liberation Sans">P</text>}
  </svg>
);

const Monitor = () => (
  <svg width="22" height="28" viewBox="0 0 22 28">
    <rect x="1" y="1" width="20" height="17" fill="#b9c7d2" stroke="#e6e6e6" />
    <polyline points="3,13 7,9 10,12 13,5 16,11 19,9" fill="none" stroke="#3f7fb5" strokeWidth="1" />
    <rect x="6" y="19" width="10" height="3" fill="#bdbdbd" />
    <rect x="3" y="22" width="16" height="4" rx="1" fill="#e0e0e0" />
  </svg>
);

const Printer = () => (
  <svg width="24" height="26" viewBox="0 0 24 26">
    <polygon points="2,8 14,2 22,6 10,12" fill="#e8e8e8" />
    <polygon points="2,8 10,12 10,20 2,16" fill="#9a9a9a" />
    <polygon points="10,12 22,6 22,14 10,20" fill="#c4c4c4" />
    <rect x="6" y="16" width="11" height="9" fill="#dedede" />
    <rect x="8" y="19" width="7" height="4" fill="#5a5a5a" />
  </svg>
);

const RegDoc = () => (
  <svg width="18" height="28" viewBox="0 0 18 28">
    <rect x="1" y="1" width="16" height="26" rx="1" fill="#8ea0c8" />
    <rect x="4" y="4" width="10" height="20" fill="#d6dcea" />
    <polygon points="9,6 12,11 6,11" fill="#e3b21f" />
    <circle cx="9" cy="18" r="3" fill="#c4392f" />
  </svg>
);

const NotesDoc = () => (
  <svg width="20" height="28" viewBox="0 0 20 28">
    <polygon points="6,1 19,1 15,27 1,26" fill="#bfe6ee" />
    <polygon points="6,1 12,1 8,27 1,26" fill="#8fd2e0" />
  </svg>
);

const Dashboard = () => (
  <svg width="24" height="24" viewBox="0 0 24 24">
    <rect x="1" y="2" width="22" height="20" fill="#2b8ad6" />
    <rect x="3" y="4" width="18" height="16" fill="#bfe0f7" />
    <circle cx="9" cy="10" r="3.5" fill="#f4a13b" />
    <path d="M15 7h5M15 10h5M5 16h15" stroke="#2b6cb0" strokeWidth="1.5" />
  </svg>
);

const Word = () => (
  <svg width="24" height="28" viewBox="0 0 24 28">
    <rect x="3" y="1" width="20" height="26" fill="#f4f7fb" />
    <rect x="1" y="4" width="17" height="18" fill="#2b5eb5" />
    <text x="9.5" y="18" fontSize="14" fontWeight="700" textAnchor="middle" fill="#fff" fontFamily="Liberation Sans">W</text>
  </svg>
);

const Terminal = () => (
  <svg width="24" height="26" viewBox="0 0 24 26">
    <rect x="1" y="1" width="22" height="24" fill="#0b0b0b" stroke="#8a8a8a" />
    <rect x="1" y="1" width="22" height="3" fill="#b8b8b8" />
    <path d="M4 8l3 2-3 2M9 13h6" stroke="#dcdcdc" fill="none" />
  </svg>
);

const MonitorBlue = () => (
  <svg width="26" height="30" viewBox="0 0 26 30">
    <polygon points="2,1 16,3 16,22 4,19" fill="#2a5fc2" />
    <polygon points="2,1 4,19 2,19" fill="#d0d8e4" />
    <circle cx="18" cy="23" r="6" fill="#e6e6e6" />
    <path d="M15 26l6-6M15 22l3 3" stroke="#3e9b54" strokeWidth="1.4" />
  </svg>
);

const Snip = () => (
  <svg width="28" height="28" viewBox="0 0 28 28">
    <circle cx="12" cy="11" r="10" fill="#e8e8e8" stroke="#d83a3a" strokeWidth="1.5" />
    <path d="M12 11L16 3" stroke="#888" />
    <circle cx="20" cy="22" r="2.5" fill="none" stroke="#2b8ad6" strokeWidth="1.5" />
    <circle cx="14" cy="24" r="2.5" fill="none" stroke="#2b8ad6" strokeWidth="1.5" />
    <path d="M17 10l2 11M22 10l-6 12" stroke="#2b8ad6" strokeWidth="1.3" />
  </svg>
);

const taskItems: React.ReactNode[] = [
  <Edge />, <Folder />, <StoreBag />, <Outlook />, <MoneyStack />, <Profiled badge="pic" />, <Profiled badge="pic" />,
  <Monitor />, <Printer />, <RegDoc />, <NotesDoc />, <MoneyStack />, <Dashboard />, <MoneyStack />,
  <FaCog size={24} color="#f2f2f2" />, <VscVscode size={28} color="#1f9cf0" />, <Word />, <Profiled badge="P" />,
  <Terminal />, <ChromeLogo />, <SiOpenai size={26} color="#f0f0f0" />, <MonitorBlue />, <Snip />,
];

const WindowsBar = () => (
  <Taskbar>
    <StartBtn><BsWindows size={17} /></StartBtn>
    <SearchBox><Search size={18} strokeWidth={1.3} />Type here to search</SearchBox>
    <TaskView>
      <svg width="16" height="16" viewBox="0 0 16 16" fill="none" stroke="#f0f0f0">
        <path d="M1 1h9M1 15h9" />
        <rect x="1.5" y="4" width="8" height="8" />
        <rect x="12.5" y="2.5" width="2.5" height="3" />
        <rect x="12.5" y="7" width="2.5" height="3" fill="#f0f0f0" />
      </svg>
    </TaskView>
    {taskItems.map((icon, i) => <TaskItem key={i} $active={i === 5}>{icon}</TaskItem>)}
    <Tray>
      <TrayIcon><ChevronUp size={18} strokeWidth={1.3} /></TrayIcon>
      <TrayIcon><WifiFan /></TrayIcon>
      <TrayIcon><BatteryCharging size={16} strokeWidth={1.3} /></TrayIcon>
      <TrayIcon><Volume1 size={16} strokeWidth={1.3} /></TrayIcon>
      <TrayLang>ENG</TrayLang>
      <Clock>17:18<br />21-07-2025</Clock>
      <Notify>
        <MessageSquareMore size={20} fill="#f0f0f0" color="#1f2a24" />
        <NotifyCount>3</NotifyCount>
      </Notify>
    </Tray>
  </Taskbar>
);

export default function App() {
  return (
    <Screen>
      <GlobalStyle />
      <BrowserTabs />
      <AddressBar />
      <AppFrame>
        <AppHeader>
          <HeaderLeft>
            <LogoBox>
              <LogoWord>intellect</LogoWord>
              <LogoTag>
                <LogoDot $c="#9c3d33" /><LogoDot $c="#a88a2c" /><LogoDot $c="#2f6f96" />
                live your dream
              </LogoTag>
            </LogoBox>
            <AllTab>All</AllTab>
          </HeaderLeft>
          <HeaderNav>
            <span>Favorites</span>
            <span>History</span>
            <span>Workspaces</span>
          </HeaderNav>
          <HeaderCenter>
            Intellect Design Arena- IT Tickets
            <Star size={15} fill="#8a7645" color="#8a7645" />
          </HeaderCenter>
          <HeaderSearch>
            <HeaderSearchInput><Search size={15} strokeWidth={1.3} />Search</HeaderSearchInput>
            <HeaderSearchCaret>▼</HeaderSearchCaret>
          </HeaderSearch>
          <HeaderIcons>
            <MessagesSquare size={16} strokeWidth={1.3} />
            <CircleHelp size={16} strokeWidth={1.3} />
            <Bell size={16} strokeWidth={1.3} />
            <Avatar>VK</Avatar>
          </HeaderIcons>
        </AppHeader>
        <AppBody>
          <SideNav />
          <TicketList />
        </AppBody>
        <RestoredDialog />
      </AppFrame>
      <WindowsBar />
    </Screen>
  );
}
